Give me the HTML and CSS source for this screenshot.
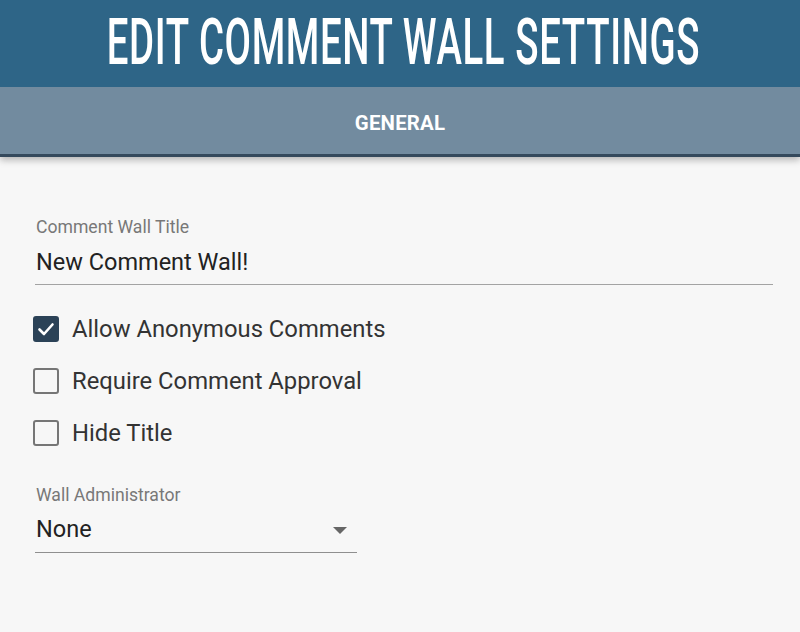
FILE: index.html
```html
<!DOCTYPE html>
<html>
<head>
<meta charset="utf-8">
<link rel="stylesheet" href="styles.css">
</head>
<body>
<div class="top">
  <header class="title-bar">
    <h1 class="title">EDIT COMMENT WALL SETTINGS</h1>
  </header>
  <nav class="tabs">
    <span class="tab">GENERAL</span>
  </nav>
</div>
<main class="content">
  <div class="field">
    <label class="field-label">Comment Wall Title</label>
    <div class="input">New Comment Wall!</div>
  </div>
  <div class="checks">
    <div class="check-row">
      <span class="box checked">
        <svg viewBox="0 0 26 26" width="26" height="26"><path d="M6.5 13.5 L11 18 L19.5 8.5" fill="none" stroke="#fff" stroke-width="2.6" stroke-linecap="round" stroke-linejoin="round"/></svg>
      </span>
      <span class="check-text">Allow Anonymous Comments</span>
    </div>
    <div class="check-row">
      <span class="box"></span>
      <span class="check-text">Require Comment Approval</span>
    </div>
    <div class="check-row">
      <span class="box"></span>
      <span class="check-text">Hide Title</span>
    </div>
  </div>
  <div class="field select-field">
    <label class="field-label">Wall Administrator</label>
    <div class="select">
      <span>None</span>
      <span class="arrow"></span>
    </div>
  </div>
</main>
</body>
</html>
```

FILE: styles.css
```css
html, body {
  margin: 0;
  padding: 0;
}
body {
  width: 800px;
  height: 632px;
  background: #f7f7f7;
  font-family: Roboto, "Liberation Sans", sans-serif;
  overflow: hidden;
}
.top {
  position: relative;
  z-index: 1;
  box-shadow: 0 3px 7px rgba(0, 0, 0, 0.28);
}
.title-bar {
  height: 87px;
  background: #2e6587;
  display: flex;
  align-items: center;
  justify-content: center;
}
.title {
  margin: -3px 0 0 7px;
  color: #fff;
  font-family: Roboto, "Liberation Sans", sans-serif;
  font-weight: 500;
  font-size: 64px;
  line-height: 87px;
  letter-spacing: 1px;
  white-space: nowrap;
  transform: scaleX(0.6);
}
.tabs {
  height: 67px;
  background: #728b9f;
  border-bottom: 3px solid #34495c;
  display: flex;
  align-items: center;
  justify-content: center;
}
.tab {
  color: #fff;
  font-weight: 700;
  font-size: 20.4px;
  letter-spacing: 0.2px;
  margin-top: 5px;
}
.content {
  padding: 60px 27px 0 35px;
}
.field-label {
  display: block;
  font-size: 17.6px;
  line-height: 20px;
  color: #787878;
  padding-left: 1px;
}
.input {
  margin-top: 11px;
  font-size: 23.5px;
  line-height: 28px;
  color: #222;
  padding-bottom: 8px;
  border-bottom: 1px solid #a3a3a3;
  padding-left: 1px;
}
.checks {
  margin-top: 18px;
  margin-left: -2px;
}
.check-row {
  height: 52px;
  display: flex;
  align-items: center;
  gap: 13px;
}
.box {
  width: 22px;
  height: 22px;
  border: 2px solid #767676;
  border-radius: 3px;
  display: flex;
  align-items: center;
  justify-content: center;
}
.box.checked {
  background: #2b4257;
  border-color: #2b4257;
}
.box svg {
  display: block;
  flex: none;
}
.check-text {
  font-size: 23.8px;
  line-height: 28px;
  color: #333;
}
.select-field {
  margin-top: 26px;
  width: 322px;
}
.select {
  margin-top: 10px;
  font-size: 23.5px;
  line-height: 28px;
  color: #222;
  padding: 0 10px 9px 1px;
  border-bottom: 1px solid #8f8f8f;
  display: flex;
  align-items: center;
  justify-content: space-between;
}
.arrow {
  width: 0;
  height: 0;
  border-left: 7px solid transparent;
  border-right: 7px solid transparent;
  border-top: 7px solid #666;
  margin-top: 2px;
}
```
